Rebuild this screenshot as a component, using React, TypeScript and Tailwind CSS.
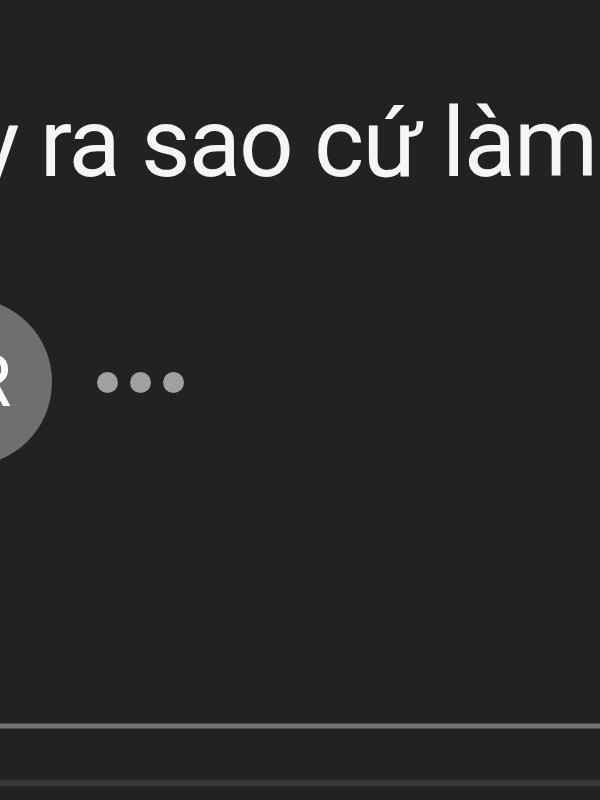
export default function App() {
  return (
    <div
      className="w-[600px] h-[800px] overflow-hidden bg-[#222222] flex flex-col"
      style={{ fontFamily: "Roboto, 'Noto Sans', sans-serif" }}
    >
      <div className="mt-[95px] ml-[-26px] whitespace-nowrap text-[96px] leading-none tracking-[-1.8px] text-[#f5f5f5]">
        y ra sao cứ làm
      </div>
      <div className="mt-[107px] flex items-center">
        <div className="ml-[-116px] w-[168px] h-[168px] shrink-0 rounded-full bg-[#6f6f6f] flex items-center justify-center">
          <span className="text-[72px] leading-none text-white">TR</span>
        </div>
        <div className="ml-[45px] flex items-center gap-[12px]">
          <div className="w-[21px] h-[21px] rounded-full bg-[#a0a0a0]" />
          <div className="w-[21px] h-[21px] rounded-full bg-[#a0a0a0]" />
          <div className="w-[21px] h-[21px] rounded-full bg-[#a0a0a0]" />
        </div>
      </div>
      <div className="mt-[257px] h-[6px] bg-[#757575] border-t border-b border-[#4a4a4a]" />
      <div className="mt-[51px] h-[6px] bg-[#363636]" />
    </div>
  );
}
